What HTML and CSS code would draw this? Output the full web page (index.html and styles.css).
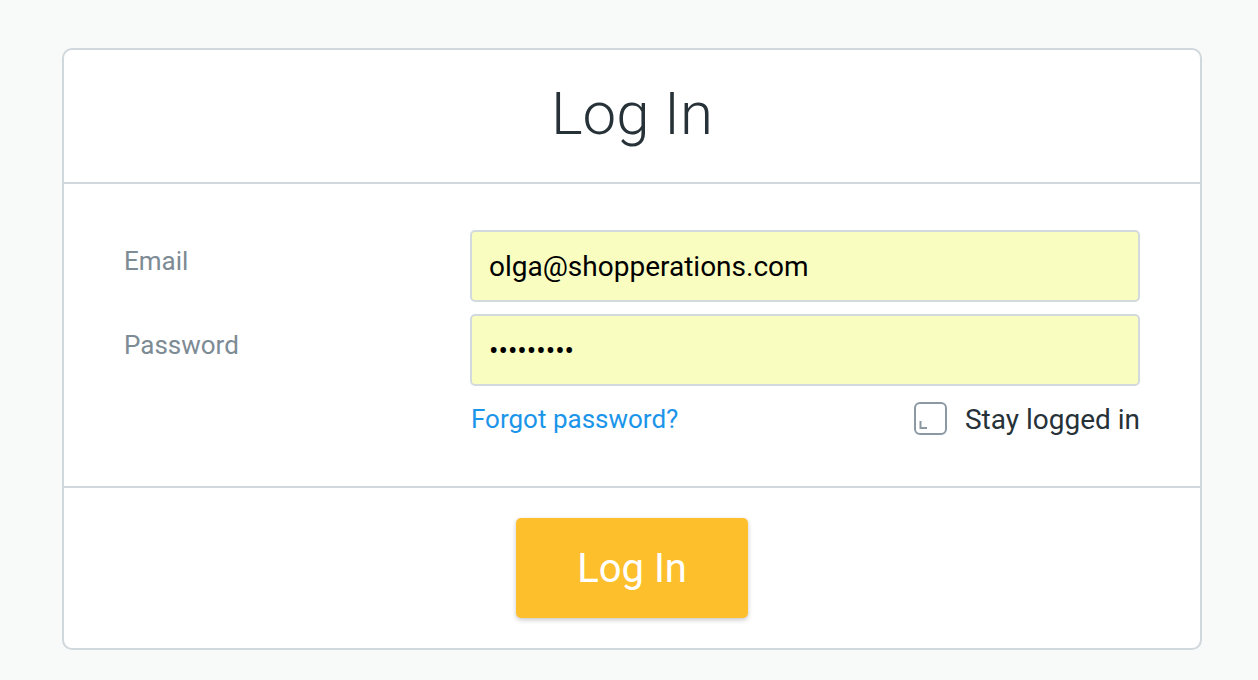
FILE: index.html
```html
<!DOCTYPE html>
<html lang="en">
<head>
<meta charset="utf-8">
<title>Log In</title>
<link rel="stylesheet" href="styles.css">
</head>
<body>
<div class="card">
  <div class="card-header">
    <h1 class="title">Log In</h1>
  </div>
  <form class="card-body">
    <div class="field">
      <label class="label" for="email">Email</label>
      <input class="input" id="email" type="text" value="olga@shopperations.com">
    </div>
    <div class="field">
      <label class="label" for="password">Password</label>
      <input class="input" id="password" type="password" value="secret123">
    </div>
    <div class="options">
      <a class="forgot" href="#">Forgot password?</a>
      <label class="stay">
        <svg class="check" width="34" height="34" viewBox="0 0 34 34">
          <rect x="1" y="1" width="31" height="31" rx="5" ry="5" fill="none" stroke="#8c99a2" stroke-width="2"/>
          <path d="M6.5 19 V26 H13" fill="none" stroke="#8c99a2" stroke-width="2"/>
        </svg>
        <span>Stay logged in</span>
      </label>
    </div>
  </form>
  <div class="card-footer">
    <button class="btn" type="button">Log In</button>
  </div>
</div>
</body>
</html>
```

FILE: styles.css
```css
* { box-sizing: border-box; }
html, body { margin: 0; padding: 0; }
body {
  background: #f8f9f9;
  font-family: Roboto, "Liberation Sans", sans-serif;
  padding: 48px 0 0 62px;
}
.card {
  width: 1140px;
  background: #ffffff;
  border: 2px solid #d0d8dc;
  border-radius: 10px;
}
.card-header {
  height: 134px;
  border-bottom: 2px solid #d0d8dc;
  display: flex;
  align-items: center;
  justify-content: center;
  padding-bottom: 5px;
}
.title {
  margin: 0;
  font-size: 60px;
  font-weight: 300;
  color: #263238;
  line-height: 1;
}
.card-body {
  margin: 0;
  padding: 46px 60px 50px 60px;
  border-bottom: 2px solid #d0d8dc;
}
.field {
  display: grid;
  grid-template-columns: 346px 1fr;
  margin-bottom: 12px;
}
.label {
  font-size: 26px;
  line-height: 30px;
  color: #7d8b94;
  padding-top: 16px;
}
.input {
  height: 72px;
  width: 100%;
  border: 2px solid #d3dadd;
  border-radius: 5px;
  background: #f9fdbf;
  font-family: Roboto, "Liberation Sans", sans-serif;
  font-size: 28px;
  color: #000000;
  padding: 0 17px;
  outline: none;
}
.options {
  margin-left: 346px;
  margin-top: 16px;
  display: flex;
  align-items: center;
  justify-content: space-between;
  height: 34px;
}
.forgot {
  font-size: 26px;
  color: #1b95ea;
  text-decoration: none;
  margin-left: 1px;
}
.stay {
  display: flex;
  align-items: center;
  gap: 17px;
  font-size: 28px;
  color: #263238;
}
.check { display: block; }
.card-footer {
  height: 160px;
  display: flex;
  justify-content: center;
  align-items: center;
}
.btn {
  width: 232px;
  height: 100px;
  border: none;
  border-radius: 5px;
  background: #fdc02c;
  color: #ffffff;
  font-family: Roboto, "Liberation Sans", sans-serif;
  font-size: 40px;
  font-weight: 400;
  box-shadow: 0 2px 5px rgba(0, 0, 0, 0.22);
  cursor: pointer;
}
```
